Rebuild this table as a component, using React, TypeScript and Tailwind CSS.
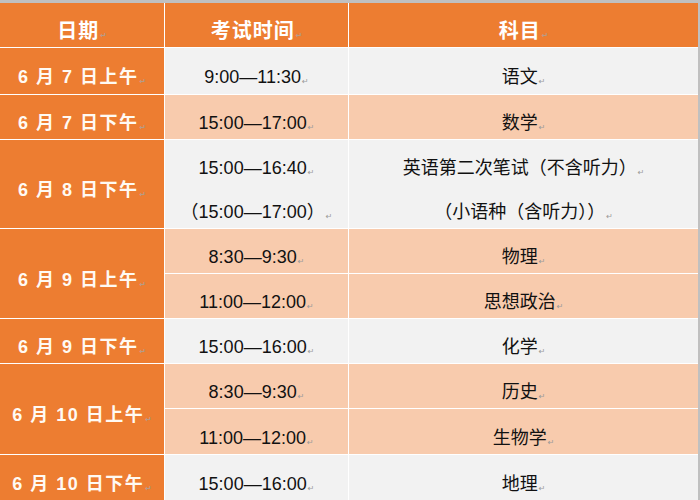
import React from "react";

const LIGHT = "bg-[#f2f2f2]";
const PEACH = "bg-[#f8cbad]";

function Mark({ tone = "gray" }: { tone?: "gray" | "head" }) {
  return (
    <span
      className={`ml-[1px] self-end mb-[2px] text-[8px] leading-none tracking-normal ${
        tone === "head" ? "text-[#b89a86]" : "text-[#9a9a9a]"
      }`}
      style={{ fontFamily: '"DejaVu Sans", sans-serif' }}
    >
      ↵
    </span>
  );
}

function Line({ children, tone }: { children: React.ReactNode; tone?: "gray" | "head" }) {
  return (
    <div className="flex h-full items-center justify-center pt-[12px]">
      <span className="flex items-end leading-none">
        <span className="leading-[22px]">{children}</span>
        <Mark tone={tone} />
      </span>
    </div>
  );
}

function Head({ children }: { children: React.ReactNode }) {
  return (
    <div className="bg-[#ed7d31] text-white text-[20px] font-bold tracking-[1px]">
      <Line tone="head">{children}</Line>
    </div>
  );
}

function DateCell({ text, span }: { text: string; span?: string }) {
  return (
    <div className={`bg-[#ed7d31] text-[#fffaf3] text-[18px] font-bold tracking-[1.5px] ${span ?? ""}`}>
      <Line tone="head">{text}</Line>
    </div>
  );
}

function Cell({ bg, children }: { bg: string; children: React.ReactNode }) {
  return (
    <div className={`${bg} text-[18px] text-[#111]`}>
      <Line>{children}</Line>
    </div>
  );
}

export default function App() {
  return (
    <div
      className="w-[700px] h-[500px] bg-[#c0c0c0] pt-[3px] pr-[2px] overflow-hidden"
      style={{ fontFamily: '"Liberation Sans", "Noto Sans CJK SC", sans-serif' }}
    >
      <div className="grid h-[497px] grid-cols-[164px_183px_1fr] grid-rows-[44px_46px_44px_88px_44px_44px_44px_44px_45px_45px] gap-px bg-white">
        <Head>日期</Head>
        <Head>考试时间</Head>
        <Head>科目</Head>

        <DateCell text="6 月 7 日上午" />
        <Cell bg={LIGHT}>9:00—11:30</Cell>
        <Cell bg={LIGHT}>语文</Cell>

        <DateCell text="6 月 7 日下午" />
        <Cell bg={PEACH}>15:00—17:00</Cell>
        <Cell bg={PEACH}>数学</Cell>

        <DateCell text="6 月 8 日下午" />
        <div className={`${LIGHT} flex flex-col text-[18px] text-[#111]`}>
          <div className="h-[44px]">
            <Line>15:00—16:40</Line>
          </div>
          <div className="h-[44px]">
            <Line>（15:00—17:00）</Line>
          </div>
        </div>
        <div className={`${LIGHT} flex flex-col text-[18px] text-[#111]`}>
          <div className="h-[44px]">
            <Line>英语第二次笔试（不含听力）</Line>
          </div>
          <div className="h-[44px]">
            <Line>（小语种（含听力））</Line>
          </div>
        </div>

        <DateCell text="6 月 9 日上午" span="row-span-2" />
        <Cell bg={PEACH}>8:30—9:30</Cell>
        <Cell bg={PEACH}>物理</Cell>
        <Cell bg={PEACH}>11:00—12:00</Cell>
        <Cell bg={PEACH}>思想政治</Cell>

        <DateCell text="6 月 9 日下午" />
        <Cell bg={LIGHT}>15:00—16:00</Cell>
        <Cell bg={LIGHT}>化学</Cell>

        <DateCell text="6 月 10 日上午" span="row-span-2" />
        <Cell bg={PEACH}>8:30—9:30</Cell>
        <Cell bg={PEACH}>历史</Cell>
        <Cell bg={PEACH}>11:00—12:00</Cell>
        <Cell bg={PEACH}>生物学</Cell>

        <DateCell text="6 月 10 日下午" />
        <Cell bg={LIGHT}>15:00—16:00</Cell>
        <Cell bg={LIGHT}>地理</Cell>
      </div>
    </div>
  );
}
